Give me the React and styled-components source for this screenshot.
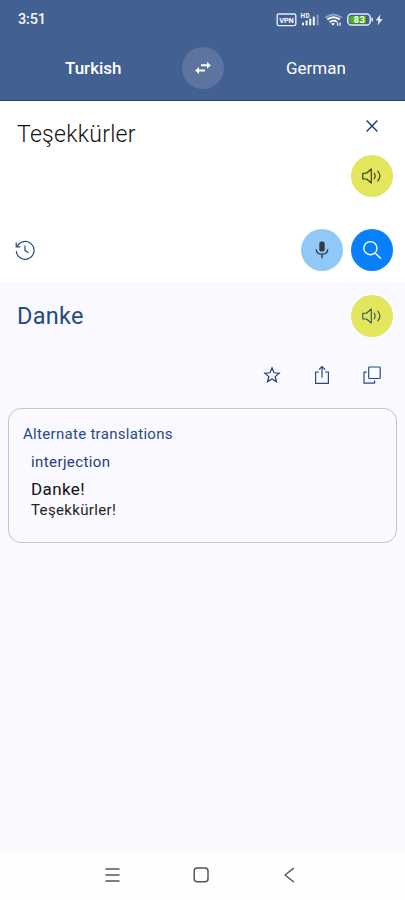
import React from 'react';
import styled, { createGlobalStyle } from 'styled-components';

const GlobalStyle = createGlobalStyle`
  * {
    box-sizing: border-box;
  }
  body {
    margin: 0;
    font-family: Roboto, "Noto Sans", sans-serif;
  }
  svg {
    flex-shrink: 0;
  }
`;

const Screen = styled.div`
  width: 405px;
  height: 900px;
  display: flex;
  flex-direction: column;
  overflow: hidden;
  background: #f9f9ff;
`;

const Header = styled.header`
  height: 101px;
  background: #426091;
  border-bottom: 1px solid #254473;
`;

const StatusBar = styled.div`
  display: flex;
  justify-content: space-between;
  align-items: center;
  height: 39px;
  padding: 0 21px 0 18px;
`;

const Text = styled.div`
  color: ${props => props.color};
  font-size: ${props => props.$size}px;
  font-weight: ${props => props.$weight || 400};
  letter-spacing: ${props => props.$spacing || 0}px;
  line-height: ${props => props.$line || 24}px;
  white-space: nowrap;
`;

const LanguageBar = styled.div`
  display: grid;
  grid-template-columns: 182px 42px 181px;
  align-items: center;
  height: 58px;
`;

const Language = styled(Text)`
  padding-left: ${props => props.$left}px;
`;

const RoundButton = styled.button`
  display: flex;
  align-items: center;
  justify-content: center;
  width: 42px;
  height: 42px;
  padding: 0;
  border: none;
  border-radius: 50%;
  background: ${props => props.$background};
`;

const PlainButton = styled.button`
  display: flex;
  align-items: center;
  justify-content: center;
  width: ${props => props.$width || 42}px;
  height: 42px;
  padding: 0;
  border: none;
  background: none;
`;

const SourcePanel = styled.section`
  display: flex;
  flex-direction: column;
  justify-content: space-between;
  height: 181px;
  padding: 4px 12px 11px 17px;
  background: #fff;
`;

const Row = styled.div`
  display: flex;
  justify-content: space-between;
  align-items: flex-start;
`;

const SourceActions = styled.div`
  display: flex;
  flex-direction: column;
  gap: 8px;
`;

const SearchActions = styled.div`
  display: flex;
  gap: 8px;
`;

const ResultPanel = styled.section`
  flex: 1;
`;

const ResultRow = styled(Row)`
  align-items: center;
  padding: 13px 12px 0 17px;
`;

const ResultActions = styled.div`
  display: flex;
  justify-content: flex-end;
  gap: 8px;
  padding: 17px 12px 0;
`;

const Card = styled.div`
  height: 135px;
  margin: 12px 8px 0;
  padding: 12px 14px;
  border: 1px solid #c4c4ca;
  border-radius: 13px;
`;

const Meanings = styled.div`
  padding: 3px 0 0 8px;
`;

const Meaning = styled.div`
  padding-top: 5px;
`;

const NavBar = styled.nav`
  display: flex;
  justify-content: space-between;
  align-items: center;
  height: 49px;
  padding: 0 104px 2px 100px;
  background: #fefefe;
`;

const StatusIcons = () => (
  <svg width="108" height="16" viewBox="276 11.6 108 16" fill="none">
    <rect x="277.2" y="13.6" width="18.6" height="11.6" rx="1.6" stroke="#e4ecf8" strokeWidth="1.4" />
    <text x="279.3" y="22.3" fill="#fff" fontSize="7.4" fontWeight="700" textLength="14.4">VPN</text>
    <text x="300.6" y="17.8" fill="#fff" fontSize="6.4" fontWeight="700" textLength="9">HD</text>
    <g fill="#f2f6fc">
      <rect x="302" y="22" width="2" height="3" rx=".7" />
      <rect x="305.6" y="20.2" width="2" height="4.8" rx=".7" />
      <rect x="309.2" y="18.2" width="2" height="6.8" rx=".7" />
      <rect x="312.8" y="16" width="2" height="9" rx=".7" />
      <rect x="316.6" y="14" width="2" height="11" rx=".7" opacity=".4" />
    </g>
    <path d="M325.3 17.3Q333.5 10.7 341.7 17.3" stroke="#8ea5c8" strokeWidth="1.9" />
    <path d="M327.3 19.2Q333.5 14.4 339.7 19.2" stroke="#fff" strokeWidth="1.9" />
    <path d="M329.6 21.8Q333.3 18.8 337 21.5" stroke="#fff" strokeWidth="1.8" />
    <path d="M331.2 23.2Q333 21.8 334.8 23.2L333 25.3Z" fill="#fff" />
    <path d="M337.6 25.4v-3.4M340 22v3.4" stroke="#fff" strokeWidth="1.2" />
    <rect x="347.8" y="13.7" width="22.4" height="11" rx="3.6" stroke="#e4ecf8" strokeWidth="1.5" />
    <path d="M351.5 15.5H366v7.4h-14.5q-2 0-2-2v-3.4q0-2 2-2Z" fill="#49b413" />
    <rect x="371.5" y="17.2" width="1.5" height="4" rx=".7" fill="#e4ecf8" />
    <text x="353.8" y="22.5" fill="#fff" fontSize="9" fontWeight="700" textLength="11">83</text>
    <path d="M380.4 13.8l-4.6 6.2h2.8l-1 5 5-6.3h-3Z" fill="#eef3fb" />
  </svg>
);

const SwapIcon = () => (
  <svg width="18" height="14" viewBox="0 0 18 14" fill="none" stroke="#fff" strokeWidth="1.9">
    <path d="M7 4.3h8M11 9.5H3" />
    <path d="M13 .9l3.8 3.4L13 7.7ZM5 6.1L1.2 9.5 5 12.9Z" fill="#fff" stroke="none" />
  </svg>
);

const CloseIcon = () => (
  <svg width="12" height="12" viewBox="0 0 12 12" fill="none" stroke="#173c7c" strokeWidth="1.4">
    <path d="M.6.6l10.8 10.8M11.4.6L.6 11.4" />
  </svg>
);

const SpeakerIcon = ({ color }) => (
  <svg width="20" height="16" viewBox="0 0 20 16" fill="none" stroke={color} strokeWidth="1.15">
    <path d="M.8 5.2h3.7L9.3 1v14L4.5 11H.8Z" strokeLinejoin="round" />
    <path d="M12.2 5.2q1.9 2.8 0 5.6M15.8 3.1q4.2 4.9 0 9.8" strokeLinecap="round" />
  </svg>
);

const MicIcon = () => (
  <svg width="14" height="18" viewBox="0 0 14 18" fill="none">
    <rect x="4.3" y=".6" width="5.4" height="10" rx="2.2" fill="#333a40" />
    <path d="M1.2 8.2q.4 5 5.8 5t5.8-5M7 13.2v4" stroke="#26384a" strokeWidth="1.3" />
  </svg>
);

const SearchIcon = () => (
  <svg width="20" height="20" viewBox="0 0 20 20" fill="none" stroke="#fff" strokeWidth="1.4">
    <circle cx="8.4" cy="8.2" r="6.6" />
    <path d="M13.1 13l5.4 5.3" strokeLinecap="round" />
  </svg>
);

const HistoryIcon = () => (
  <svg width="20" height="20" viewBox="0 0 20 20" fill="none" stroke="#274878" strokeWidth="1.15">
    <path d="M2.1 6.6A8.9 8.9 0 1 1 1.3 11" />
    <path d="M1.2 2.6v4.2h4.2M10 5.4v5.2l3.5 2.2" />
  </svg>
);

const StarIcon = () => (
  <svg width="18" height="18" viewBox="0 0 18 18" fill="none" stroke="#1d3f78" strokeWidth="1.2">
    <path d="M9 1.8l2 5 5.2.4-4 3.4 1.3 5.2L9 13l-4.5 2.8 1.3-5.2-4-3.4L7 6.8Z" />
  </svg>
);

const ShareIcon = () => (
  <svg width="16" height="20" viewBox="0 0 16 20" fill="none" stroke="#274a86" strokeWidth="1.2">
    <path d="M5 7H1.6v11.4h12.8V7H11M8 12.8V1.6M4.9 4.6L8 1.5l3.1 3.1" />
  </svg>
);

const CopyIcon = () => (
  <svg width="18" height="18" viewBox="0 0 18 18" fill="none" stroke="#274a86" strokeWidth="1.2" strokeLinejoin="round">
    <rect x="5.7" y="1" width="11.5" height="11.5" rx=".8" />
    <path d="M3.8 6.2H1v10.9h10.6v-2.7" />
  </svg>
);

const MenuIcon = () => (
  <svg width="24" height="24" viewBox="0 0 24 24" stroke="#555" strokeWidth="1.4" strokeLinecap="round">
    <path d="M6 6h13M6 12h13M6 18h13" />
  </svg>
);

const HomeIcon = () => (
  <svg width="24" height="24" viewBox="0 0 24 24" fill="none" stroke="#555" strokeWidth="1.5">
    <rect x="5.2" y="5" width="13.8" height="13.8" rx="3" />
  </svg>
);

const BackIcon = () => (
  <svg width="24" height="24" viewBox="0 0 24 24" fill="none" stroke="#555" strokeWidth="1.4" strokeLinecap="round" strokeLinejoin="round">
    <path d="M16.4 5.4L8.1 12l8.3 6.7" />
  </svg>
);

const App = () => {
  return (
    <Screen>
      <GlobalStyle />
      <Header>
        <StatusBar>
          <Text color="#f4f8ff" $size={14.5} $weight={480} $spacing={-0.2}>3:51</Text>
          <StatusIcons />
        </StatusBar>
        <LanguageBar>
          <Language color="#fff" $size={17} $weight={500} $left={65}>Turkish</Language>
          <RoundButton $background="#5c749f"><SwapIcon /></RoundButton>
          <Language color="#fff" $size={17} $weight={430} $left={62}>German</Language>
        </LanguageBar>
      </Header>

      <SourcePanel>
        <Row>
          <Text color="#111" $size={23} $weight={360} $spacing={0.27} $line={59}>Teşekkürler</Text>
          <SourceActions>
            <PlainButton><CloseIcon /></PlainButton>
            <RoundButton $background="#e1e65d"><SpeakerIcon color="#35381f" /></RoundButton>
          </SourceActions>
        </Row>
        <Row>
          <PlainButton $width={16}><HistoryIcon /></PlainButton>
          <SearchActions>
            <RoundButton $background="#90c8f8"><MicIcon /></RoundButton>
            <RoundButton $background="#0880fc"><SearchIcon /></RoundButton>
          </SearchActions>
        </Row>
      </SourcePanel>

      <ResultPanel>
        <ResultRow>
          <Text color="#264b83" $size={23.5} $weight={400} $spacing={0.3}>Danke</Text>
          <RoundButton $background="#e1e65d"><SpeakerIcon color="#3c5663" /></RoundButton>
        </ResultRow>
        <ResultActions>
          <PlainButton><StarIcon /></PlainButton>
          <PlainButton><ShareIcon /></PlainButton>
          <PlainButton><CopyIcon /></PlainButton>
        </ResultActions>
        <Card>
          <Text color="#274b84" $size={15} $weight={380} $spacing={0.3} $line={26}>Alternate translations</Text>
          <Meanings>
            <Text color="#1f3f80" $size={15} $weight={380} $spacing={0.4}>interjection</Text>
            <Meaning>
              <Text color="#111" $size={17} $weight={390} $spacing={0.4} $line={20}>Danke!</Text>
              <Text color="#222" $size={15} $weight={380} $spacing={0.35} $line={22}>Teşekkürler!</Text>
            </Meaning>
          </Meanings>
        </Card>
      </ResultPanel>

      <NavBar>
        <MenuIcon />
        <HomeIcon />
        <BackIcon />
      </NavBar>
    </Screen>
  );
};

export default App;
